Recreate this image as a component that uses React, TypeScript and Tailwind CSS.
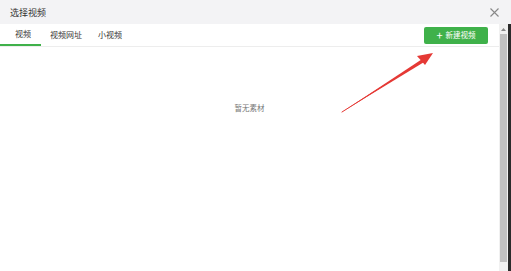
import React from "react";

export default function App() {
  const font = { fontFamily: '"Noto Sans CJK SC", "Noto Sans", sans-serif' };
  return (
    <div className="w-[511px] h-[271px] flex flex-col bg-white overflow-hidden relative" style={font}>
      <div className="h-[24px] bg-[#f3f3f5] flex items-center justify-between pl-[10px] pr-[12px] shrink-0">
        <span className="text-[9px] text-[#333] leading-none">选择视频</span>
        <svg width="9" height="9" viewBox="0 0 9 9" className="block">
          <path d="M0.5 0.5L8.5 8.5M8.5 0.5L0.5 8.5" stroke="#888" strokeWidth="1.1" />
        </svg>
      </div>
      <div className="flex-1 flex min-h-0">
        <div className="flex-1 flex flex-col bg-white">
          <div className="h-[23px] border-b border-[#ededed] flex items-stretch justify-between pr-[11px] shrink-0">
            <div className="flex items-stretch text-[8px] text-[#333]">
              <div className="w-[41px] pl-[15px] flex items-center border-b-2 border-[#3fb14a]">视频</div>
              <div className="pl-[9px] pr-[16px] flex items-center">视频网址</div>
              <div className="flex items-center">小视频</div>
            </div>
            <div className="flex items-center">
              <div className="w-[64px] h-[17px] bg-[#3fb14a] rounded-[2px] flex items-center justify-center gap-[3px] text-white text-[7.5px]">
                <span className="text-[11px] leading-none">+</span>
                <span>新建视频</span>
              </div>
            </div>
          </div>
          <div className="flex-1 flex justify-center pt-[57px]">
            <span className="text-[7.5px] text-[#777] leading-none">暂无素材</span>
          </div>
        </div>
        <div className="w-[9px] flex flex-col bg-[#f1f1f1]">
          <div className="h-[10px] flex items-center justify-center">
            <svg width="5" height="3" viewBox="0 0 5 3"><path d="M0 3L2.5 0L5 3Z" fill="#888" /></svg>
          </div>
          <div className="flex-1 bg-[#c1c1c1] mx-[1px]" />
          <div className="h-[9px]" />
        </div>
        <div className="w-[3px] bg-[#2b2b2b]" />
      </div>
      <svg className="absolute left-0 top-0 pointer-events-none" width="511" height="271">
        <path d="M342 112L423 58.5L425 61.5Z" fill="#e53935" />
        <line x1="342" y1="112" x2="424" y2="60" stroke="#e53935" strokeWidth="1" strokeLinecap="round" />
        <path d="M433 53L417 56L425 65Z" fill="#e53935" />
      </svg>
    </div>
  );
}
